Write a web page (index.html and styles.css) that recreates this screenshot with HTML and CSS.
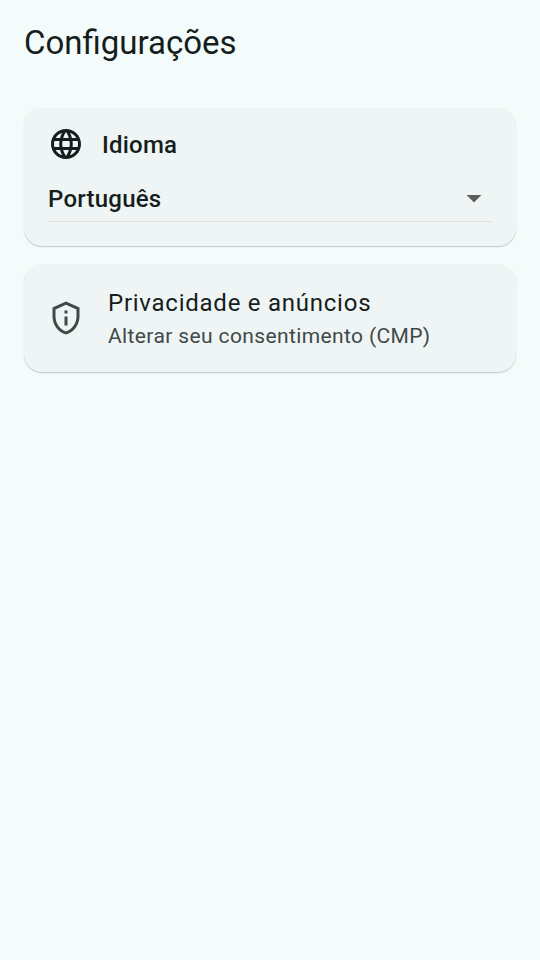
FILE: index.html
```html
<!DOCTYPE html>
<html lang="pt">
<head>
<meta charset="utf-8">
<title>Configurações</title>
<link rel="stylesheet" href="styles.css">
</head>
<body>
<header class="app-bar"><h1>Configurações</h1></header>
<main class="settings">
  <section class="card language">
    <div class="language-head">
      <svg class="icon" viewBox="0 0 24 24"><path d="M11.99 2C6.47 2 2 6.48 2 12s4.47 10 9.99 10C17.52 22 22 17.52 22 12S17.52 2 11.99 2zm6.93 6h-2.95c-.32-1.25-.78-2.45-1.38-3.56 1.84.63 3.37 1.91 4.33 3.56zM12 4.04c.83 1.2 1.48 2.53 1.91 3.96h-3.82c.43-1.43 1.08-2.76 1.91-3.96zM4.26 14C4.1 13.36 4 12.69 4 12s.1-1.36.26-2h3.38c-.08.66-.14 1.32-.14 2s.06 1.34.14 2H4.26zm.82 2h2.95c.32 1.25.78 2.45 1.38 3.56-1.84-.63-3.37-1.9-4.33-3.56zm2.95-8H5.08c.96-1.66 2.49-2.93 4.33-3.56C8.81 5.55 8.35 6.75 8.03 8zM12 19.96c-.83-1.2-1.48-2.53-1.91-3.96h3.82c-.43 1.43-1.08 2.76-1.91 3.96zM14.34 14H9.66c-.09-.66-.16-1.32-.16-2s.07-1.35.16-2h4.68c.09.65.16 1.32.16 2s-.07 1.34-.16 2zm.25 5.56c.6-1.11 1.06-2.31 1.38-3.56h2.95c-.96 1.65-2.49 2.93-4.33 3.56zM16.36 14c.08-.66.14-1.32.14-2s-.06-1.34-.14-2h3.38c.16.64.26 1.31.26 2s-.1 1.36-.26 2h-3.38z"/></svg>
      <h2>Idioma</h2>
    </div>
    <div class="select">
      <span>Português</span>
      <svg class="icon arrow" viewBox="0 0 24 24"><path d="M7 10l5 5 5-5z"/></svg>
    </div>
  </section>
  <section class="card privacy">
    <svg class="icon shield" viewBox="0 0 24 24"><path d="M12 1L3 5v6c0 5.55 3.84 10.74 9 12 5.16-1.26 9-6.45 9-12V5l-9-4zm7 10c0 4.52-2.98 8.69-7 9.93-4.02-1.24-7-5.41-7-9.93V6.3l7-3.11 7 3.11V11zM11 11h2v6h-2zM11 7h2v2h-2z"/></svg>
    <div class="privacy-text">
      <h2>Privacidade e anúncios</h2>
      <p>Alterar seu consentimento (CMP)</p>
    </div>
  </section>
</main>
</body>
</html>
```
FILE: styles.css
```css
* { box-sizing: border-box; margin: 0; }
body { min-height: 960px; background: #f3fcfb; color: #161d1d; font-family: Roboto, sans-serif; }
.app-bar { height: 84px; padding: 2px 24px 0; display: flex; align-items: center; }
h1 { font-size: 33px; font-weight: 400; line-height: 42px; }
.settings { padding: 24px; display: flex; flex-direction: column; gap: 18px; }
.card { border-radius: 18px; background: #eff5f4; box-shadow: 0 1px 1px rgba(0,0,0,.18), 0 1px 2px rgba(0,0,0,.04); }
.icon { width: 36px; height: 36px; flex: none; fill: currentColor; }
.language { height: 138px; padding: 18px 24px 24px; }
.language-head { display: flex; align-items: center; gap: 18px; }
.language h2 { font-size: 24px; font-weight: 500; line-height: 36px; letter-spacing: .225px; padding-top: 1px; margin-bottom: -1px; }
.select { display: flex; align-items: center; justify-content: space-between; height: 60px; border-bottom: 1px solid #dde2e1; font-size: 24px; font-weight: 500; letter-spacing: .225px; padding-top: 12px; }
.select span { padding-top: 2px; }
.arrow { fill: #5b5f5f; }
.privacy { height: 108px; padding: 0 24px; display: flex; align-items: center; gap: 24px; }
.shield { color: #3f4948; }
.privacy h2 { font-size: 24px; font-weight: 400; line-height: 36px; letter-spacing: .75px; }
.privacy p { font-size: 21px; line-height: 30px; letter-spacing: .375px; color: #3f4948; }
```
